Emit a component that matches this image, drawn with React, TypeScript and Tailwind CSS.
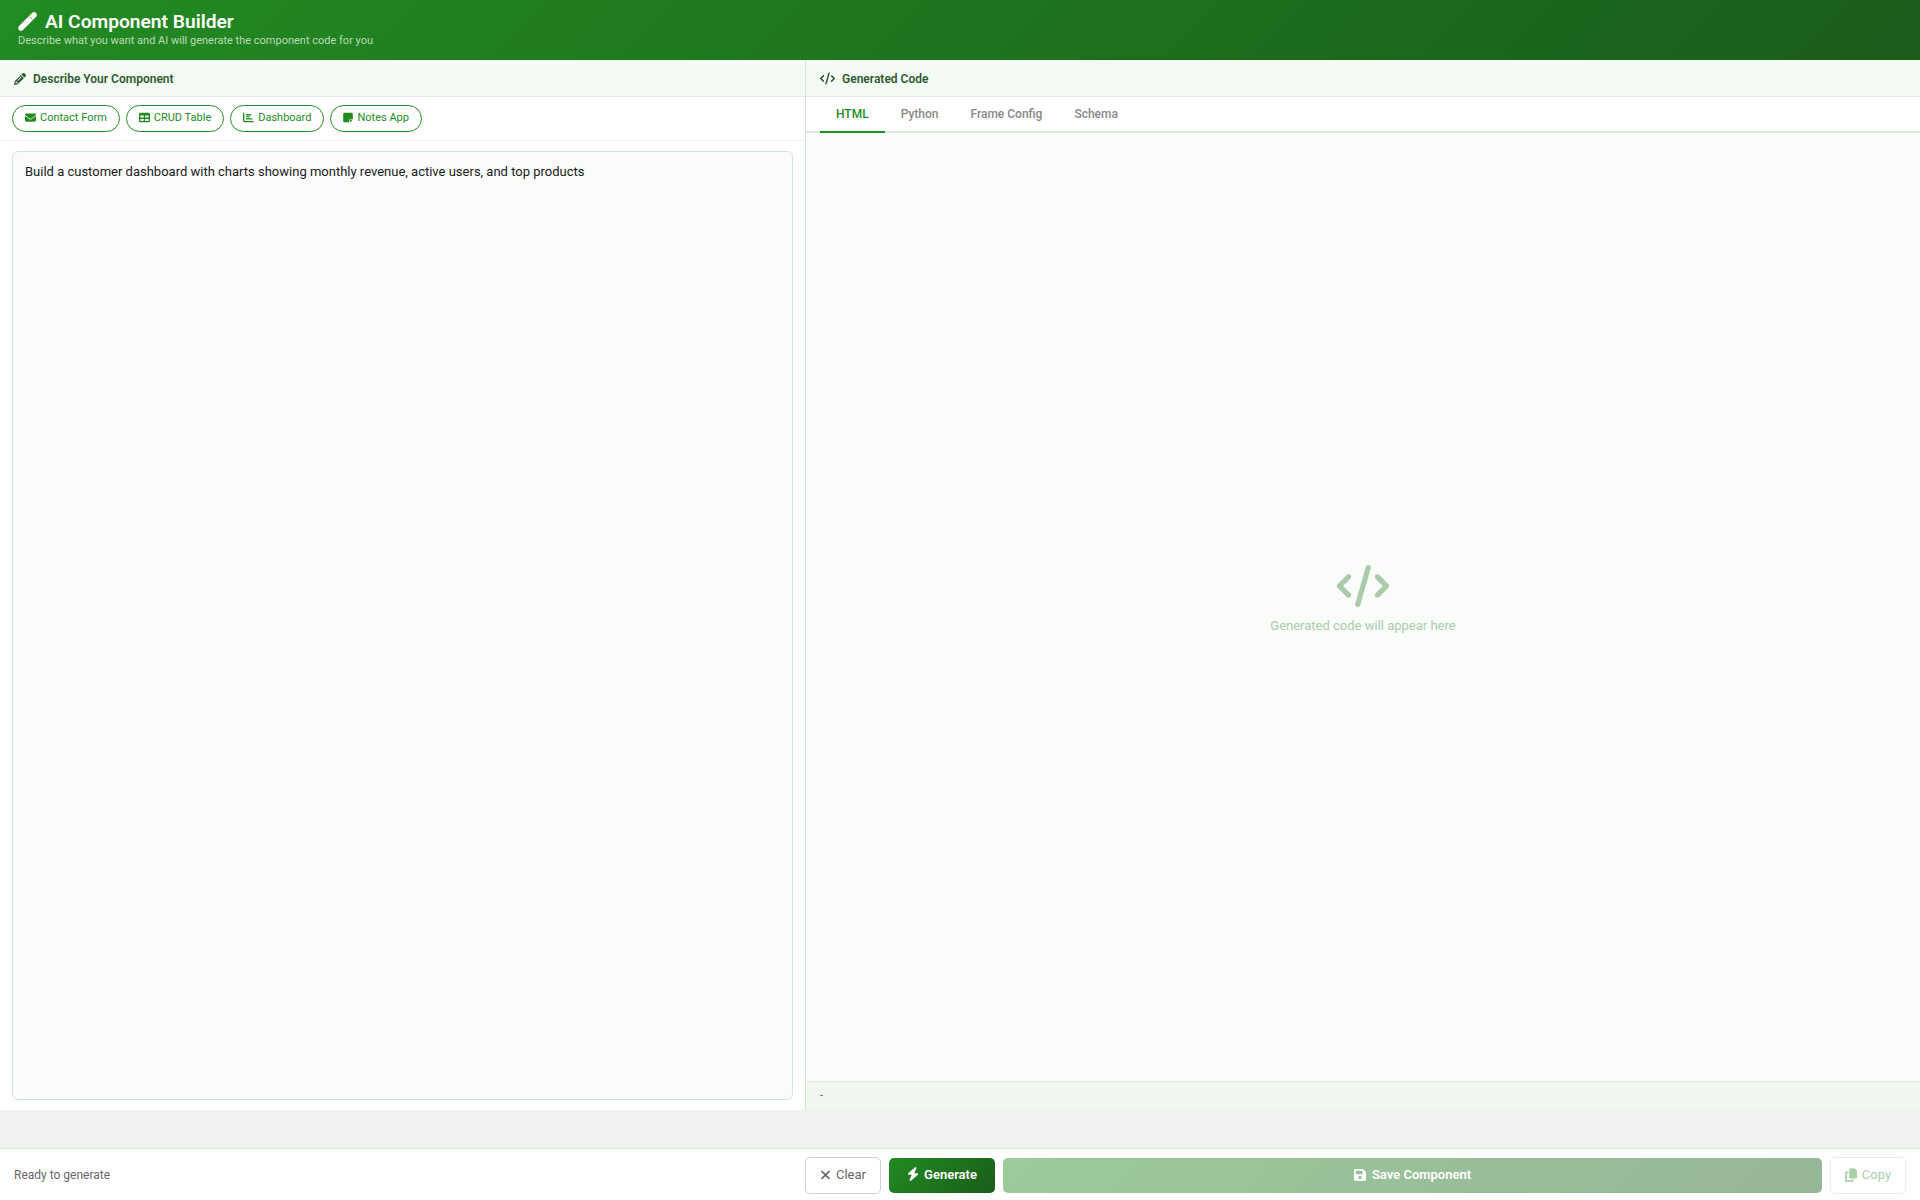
import { FaPencil, FaEnvelope, FaTable, FaChartBar, FaNoteSticky, FaCode, FaXmark, FaBolt, FaFloppyDisk, FaCopy } from "react-icons/fa6";

const presets = [
  { icon: FaEnvelope, label: "Contact Form", iconClass: "mb-[2px] h-[11px] w-[11px]" },
  { icon: FaTable, label: "CRUD Table", iconClass: "mb-[2px] h-[11px] w-[11px]" },
  { icon: FaChartBar, label: "Dashboard", iconClass: "mb-[2px] h-[11px] w-[11px]" },
  { icon: FaNoteSticky, label: "Notes App", iconClass: "mb-[2px] h-[11px] w-[10px]" },
];
const tabs = ["HTML", "Python", "Frame Config", "Schema"];

export default function App() {
  return (
    <div className="flex h-[1200px] w-[1920px] flex-col overflow-hidden bg-[#eff2ef] font-['Roboto',sans-serif]">
      <header className="h-[60px] shrink-0 bg-[linear-gradient(135deg,#228b22,#1a5c1a)] px-[18px] pt-[10px] text-white">
        <div className="flex h-[23px] items-center gap-[8px]">
          <svg viewBox="0 0 19 19" className="h-[19px] w-[19px]">
            <path d="M3 16 L16 3" stroke="#ffffff" strokeWidth="5.5" strokeLinecap="round" fill="none" />
            <path d="M11.6 4.8 L14.2 7.4" stroke="#228b22" strokeWidth="0.8" fill="none" />
          </svg>
          <h1 className="text-[19.2px] font-semibold leading-[23px]">AI Component Builder</h1>
        </div>
        <p className="mt-[1px] text-[11px] leading-[14px] text-white/70">Describe what you want and AI will generate the component code for you</p>
      </header>

      <main className="flex h-[1050px] shrink-0">
        <section className="flex w-[806px] shrink-0 flex-col border-r border-[#d5e5d5] bg-white">
          <div className="flex h-[37px] shrink-0 items-center gap-[7px] border-b border-[#e2ece2] bg-[#f4faf4] px-[14px] pt-[1px] text-[12px] font-semibold text-[#2d5a2d]">
            <FaPencil className="h-[12px] w-[12px]" />
            Describe Your Component
          </div>
          <div className="flex h-[44px] shrink-0 items-center gap-[6px] border-b border-[#eef2ee] px-[12px]">
            {presets.map(({ icon: Icon, label, iconClass }) => (
              <button key={label} className="flex h-[27px] items-center gap-[4px] rounded-full border border-[#228b22] bg-white px-[12px] text-[11px] text-[#228b22]">
                <Icon className={iconClass} />
                {label}
              </button>
            ))}
          </div>
          <div className="flex flex-1 px-[12px] pb-[10px] pt-[10px]">
            <textarea
              className="h-full w-full resize-none rounded-[6px] border border-[#d5e5d5] bg-[#fafcfa] px-[12px] py-[11px] text-[13px] leading-[17px] text-[#1a1a1a] outline-none"
              defaultValue="Build a customer dashboard with charts showing monthly revenue, active users, and top products"
            />
          </div>
        </section>

        <section className="flex min-w-0 flex-1 flex-col bg-[#fafcfa]">
          <div className="flex h-[37px] shrink-0 items-center gap-[7px] border-b border-[#e2ece2] bg-[#f4faf4] px-[14px] pt-[1px] text-[12px] font-semibold text-[#2d5a2d]">
            <FaCode className="h-[15px] w-[15px]" />
            Generated Code
          </div>
          <nav className="flex h-[36px] shrink-0 border-b-2 border-[#dfe9df] bg-white px-[14px]">
            {tabs.map((tab, i) => (
              <button
                key={tab}
                className={
                  i === 0
                    ? "-mb-[2px] h-[36px] border-b-2 border-[#228b22] px-[16px] pb-[1px] text-[12px] font-medium text-[#228b22]"
                    : "-mb-[2px] h-[36px] px-[16px] pb-[3px] text-[12px] font-medium text-[#888888]"
                }
              >
                {tab}
              </button>
            ))}
          </nav>
          <div className="flex flex-1 flex-col items-center justify-center pb-[14px]">
            <FaCode className="h-[42px] w-[54px] text-[#aacbaa]" />
            <p className="mt-[9px] text-[13px] text-[#aacbaa]">Generated code will appear here</p>
          </div>
          <div className="flex h-[29px] shrink-0 items-center border-t border-[#dfe9df] bg-[#f0f7f0] px-[14px] text-[11px] text-[#666666]">-</div>
        </section>
      </main>

      <div className="h-[38px] shrink-0" />

      <footer className="flex h-[52px] shrink-0 items-center gap-[8px] border-t border-[#d5e5d5] bg-white pl-[14px] pr-[14px] pt-[1px]">
        <span className="mr-auto text-[12px] text-[#666666]">Ready to generate</span>
        <button className="flex h-[37px] w-[76px] items-center justify-center gap-[5px] rounded-[5px] border border-[#d0d0d0] bg-white text-[13px] text-[#666666]">
          <FaXmark className="h-[14px] w-[11px]" />
          Clear
        </button>
        <button className="flex h-[35px] w-[106px] items-center justify-center gap-[5px] rounded-[5px] bg-[linear-gradient(135deg,#228b22,#1a5c1a)] text-[13px] font-semibold text-white">
          <FaBolt className="mb-[2px] h-[14px] w-[12px]" />
          Generate
        </button>
        <button className="flex h-[35px] w-[819px] items-center justify-center gap-[6px] rounded-[5px] bg-[linear-gradient(135deg,#228b22,#1a5c1a)] text-[13px] font-semibold text-white opacity-45">
          <FaFloppyDisk className="mb-[1px] h-[14px] w-[12px]" />
          Save Component
        </button>
        <button className="flex h-[37px] w-[76px] items-center justify-center gap-[5px] rounded-[5px] border border-[#d0d0d0] bg-white text-[13px] text-[#228b22] opacity-40">
          <FaCopy className="h-[14px] w-[12px]" />
          Copy
        </button>
      </footer>
    </div>
  );
}
